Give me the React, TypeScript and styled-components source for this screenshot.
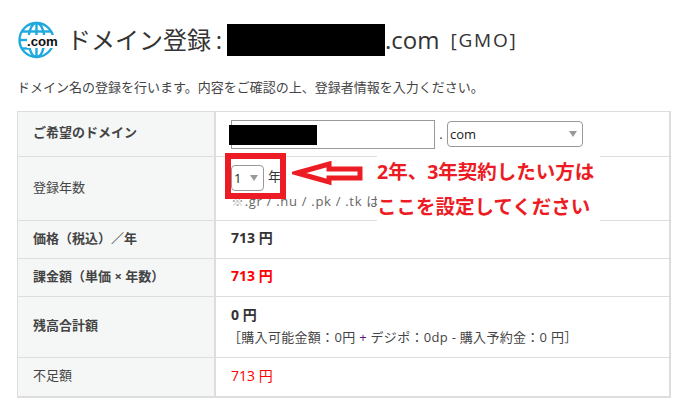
import React from 'react';
import styled, { createGlobalStyle } from 'styled-components';

const GlobalStyle = createGlobalStyle`
  html, body {
    margin: 0;
    padding: 0;
    background: #fff;
  }
  body {
    font-family: "Open Sans", "Noto Sans CJK JP", sans-serif;
    color: #333;
  }
`;

const Page = styled('div')`
  position: relative;
  width: 685px;
  height: 404px;
  overflow: hidden;
  padding: 21px 14px 0 17px;
  box-sizing: border-box;
`;

const TitleRow = styled('div')`
  display: flex;
  align-items: center;
  height: 38px;
`;

const TitleText = styled('h1')`
  margin: 0 0 0 8px;
  font-size: 24px;
  font-weight: 400;
  line-height: 36px;
  color: #333;
  white-space: nowrap;
  display: flex;
  align-items: center;
`;

const Colon = styled('span')`
  width: 16px;
  text-align: center;
`;

const Masked = styled('span')<{ $w: number; $h: number }>`
  display: inline-block;
  width: ${p => p.$w}px;
  height: ${p => p.$h}px;
  background: #000;
`;

const Registrar = styled('span')`
  margin-left: 11px;
  font-size: 19px;
  letter-spacing: 1.8px;
`;

const Lead = styled('p')`
  margin: 19px 0 15px;
  font-size: 13px;
  line-height: 18px;
  color: #444;
  white-space: nowrap;
`;

const Table = styled('div')`
  width: 654px;
  border: 2px solid #ddd;
  border-width: 1px 2px 2px 1px;
  box-sizing: border-box;
`;

const Row = styled('div')<{ $h: number; $last?: boolean }>`
  display: grid;
  grid-template-columns: 198px 1fr;
  height: ${p => p.$h}px;
  border-bottom: ${p => (p.$last ? 'none' : '1px solid #ddd')};
  box-sizing: border-box;
`;

const Label = styled('div')<{ $bold?: boolean }>`
  display: flex;
  align-items: center;
  padding: 0 0 5px 15px;
  background: #f5f7f7;
  border-right: 2px solid #ddd;
  font-size: 13px;
  font-weight: ${p => (p.$bold ? 700 : 400)};
  color: #444;
`;

const Cell = styled('div')`
  display: flex;
  flex-direction: column;
  justify-content: center;
  padding: 0 0 5px 15px;
  font-size: 13px;
`;

const Inline = styled('div')`
  display: flex;
  align-items: center;
`;

const DomainRow = styled(Inline)`
  margin-top: 5px;
`;

const YearRow = styled(Inline)`
  margin-top: 2px;
`;

const TextInput = styled('div')`
  position: relative;
  width: 204px;
  height: 29px;
  border: 1px solid #999;
  box-sizing: border-box;
`;

const Dot = styled('span')`
  width: 12px;
  text-align: center;
  font-size: 13px;
`;

const Select = styled('div')<{ $w: number }>`
  display: flex;
  align-items: center;
  justify-content: space-between;
  width: ${p => p.$w}px;
  height: 26px;
  padding: 0 4px 0 2px;
  border: 1px solid #999;
  border-radius: 4px;
  box-sizing: border-box;
  font-size: 13px;
  color: #222;
  background: #fff;
`;

const Caret = styled('span')`
  width: 0;
  height: 0;
  margin-right: 1px;
  border-left: 4px solid transparent;
  border-right: 4px solid transparent;
  border-top: 6px solid #999;
`;

const YearText = styled('span')`
  margin-left: 4px;
  font-size: 13px;
  position: relative;
  top: -2px;
`;

const Note = styled('div')`
  margin-top: 1px;
  font-size: 13px;
  line-height: 18px;
  letter-spacing: 0.7px;
  color: #666;
  white-space: nowrap;
`;

const NoteMark = styled('span')`
  color: #aaa;
`;

const Amount = styled('div')<{ $red?: boolean; $bold?: boolean }>`
  font-size: 14px;
  font-weight: ${p => (p.$bold ? 700 : 400)};
  color: ${p => (p.$red ? '#f00' : '#333')};
`;

const Breakdown = styled('div')`
  margin: 4px 0 0 -3px;
  font-size: 13px;
  line-height: 18px;
  letter-spacing: 0.3px;
  color: #444;
  white-space: nowrap;
`;

const Plus = styled('span')`
  color: #60157a;
`;

const MaskInField = styled(Masked)`
  position: absolute;
  left: -3px;
  top: 4px;
`;

const RedBox = styled('div')`
  position: absolute;
  left: 225px;
  top: 153px;
  width: 61px;
  height: 46px;
  border: 6px solid #ed1c24;
  box-sizing: border-box;
`;

const ArrowSvg = styled('svg')`
  position: absolute;
  left: 292px;
  top: 158px;
`;

const Callout = styled('div')`
  position: absolute;
  left: 377px;
  top: 156px;
  width: 223px;
  height: 65px;
  box-sizing: border-box;
  background: #fff;
  color: #ed1c24;
  font-size: 19.5px;
  font-weight: 700;
  line-height: 31px;
  white-space: nowrap;
`;

const CalloutLine = styled('div')`
  & + & {
    margin-top: 4px;
  }
`;

function ComGlobe() {
  return (
    <svg width="42" height="38" viewBox="0 0 42 38">
      <g fill="none" stroke="#1fa9dc" strokeWidth="2.4">
        <circle cx="19.5" cy="19" r="17" />
        <ellipse cx="19.5" cy="19" rx="8" ry="17" />
        <path d="M19.5 2V36" />
        <path d="M5 10.5H34" />
        <path d="M2.5 19H12" />
        <path d="M5 27.5H12" />
      </g>
      <rect x="10" y="14" width="32" height="13" fill="#fff" />
      <text x="10" y="25" fontFamily="Liberation Sans, sans-serif" fontSize="13.2" fontWeight="700" fill="#111">
        .com
      </text>
    </svg>
  );
}

export default function App() {
  return (
    <>
      <GlobalStyle />
      <Page>
        <TitleRow>
          <ComGlobe />
          <TitleText>
            ドメイン登録
            <Colon>:</Colon>
            <Masked $w={158} $h={32} />
            .com
            <Registrar>[GMO]</Registrar>
          </TitleText>
        </TitleRow>
        <Lead>ドメイン名の登録を行います。内容をご確認の上、登録者情報を入力ください。</Lead>
        <Table>
          <Row $h={45}>
            <Label $bold>ご希望のドメイン</Label>
            <Cell>
              <DomainRow>
                <TextInput>
                  <MaskInField $w={88} $h={20} />
                </TextInput>
                <Dot>.</Dot>
                <Select $w={136}>
                  com
                  <Caret />
                </Select>
              </DomainRow>
            </Cell>
          </Row>
          <Row $h={64}>
            <Label>登録年数</Label>
            <Cell>
              <YearRow>
                <Select $w={33}>
                  1
                  <Caret />
                </Select>
                <YearText>年</YearText>
              </YearRow>
              <Note>
                <NoteMark>※</NoteMark>.gr / .nu / .pk / .tk は
              </Note>
            </Cell>
          </Row>
          <Row $h={38}>
            <Label $bold>価格（税込）／年</Label>
            <Cell>
              <Amount $bold>713 円</Amount>
            </Cell>
          </Row>
          <Row $h={38}>
            <Label $bold>課金額（単価 × 年数）</Label>
            <Cell>
              <Amount $bold $red>713 円</Amount>
            </Cell>
          </Row>
          <Row $h={61}>
            <Label $bold>残高合計額</Label>
            <Cell>
              <Amount $bold>0 円</Amount>
              <Breakdown>
                ［購入可能金額：0円 <Plus>+</Plus> デジポ：0dp - 購入予約金：0 円］
              </Breakdown>
            </Cell>
          </Row>
          <Row $h={38} $last>
            <Label>不足額</Label>
            <Cell>
              <Amount $red>713 円</Amount>
            </Cell>
          </Row>
        </Table>
        <RedBox />
        <ArrowSvg width="72" height="30" viewBox="0 0 72 30">
          <path
            d="M5 15L37 6V11H68V20H37V24Z"
            fill="#fff"
            stroke="#ed1c24"
            strokeWidth="5"
            strokeLinejoin="miter"
          />
        </ArrowSvg>
        <Callout>
          <CalloutLine>2年、3年契約したい方は</CalloutLine>
          <CalloutLine>ここを設定してください</CalloutLine>
        </Callout>
      </Page>
    </>
  );
}
